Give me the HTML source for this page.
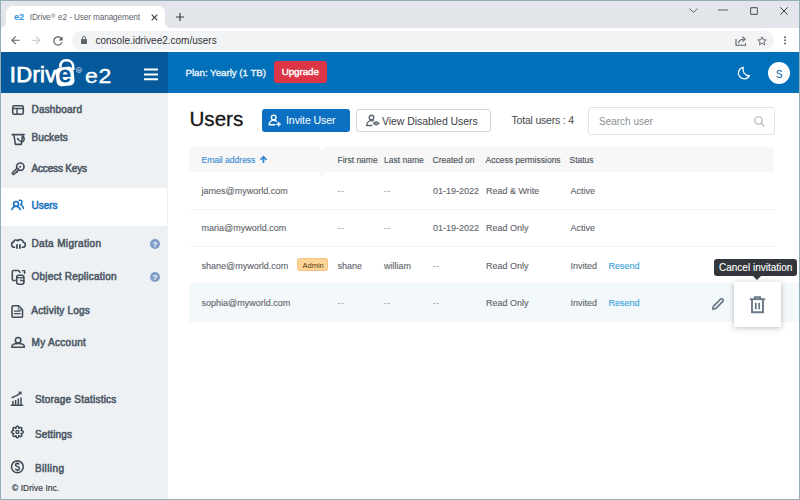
<!DOCTYPE html>
<html><head><meta charset="utf-8">
<style>
*{box-sizing:border-box;margin:0;padding:0}
html,body{width:800px;height:500px;overflow:hidden;background:#fff;font-family:"Liberation Sans",sans-serif;position:relative}
div,span,svg{position:absolute}
.t{white-space:nowrap;line-height:1}
svg{overflow:visible}
/* browser chrome */
#tabs{left:0;top:0;width:800px;height:28px;background:#e2e5e9}
#tab{left:6px;top:6px;width:159px;height:22px;background:#fff;border-radius:7px 7px 0 0}
#toolbar{left:0;top:28px;width:800px;height:24px;background:#fff}
#pill{left:72px;top:31px;width:702px;height:19px;border-radius:10px;background:#f1f3f4}
/* header */
#hdr{left:0;top:52px;width:800px;height:41px;background:#0070bb}
#hdrl{left:0;top:52px;width:168px;height:41px;background:#065a9b}
/* sidebar */
#side{left:0;top:93px;width:168px;height:407px;background:#eef1f4}
.mi{color:#4d5965;font-size:10px;-webkit-text-stroke:0.55px #4d5965}
#content{left:168px;top:93px;width:632px;height:407px;background:#fff}
.th{font-size:8.5px;color:#4f555b;-webkit-text-stroke:0.15px #4f555b}
.td{font-size:9px;color:#5f656b;-webkit-text-stroke:0.12px #5f656b}
.border{background:#93adb9}
</style></head><body>
<!-- tab strip -->
<div id="tabs"></div>
<div style="left:1px;top:22px;width:170px;height:6px;background:#fff"></div><div style="left:0;top:0;width:6px;height:28px;background:#e2e5e9;border-bottom-right-radius:6px"></div><div style="left:165px;top:0;width:635px;height:28px;background:#e2e5e9;border-bottom-left-radius:6px"></div><div id="tab"></div>
<span class="t" style="left:14px;top:12px;font-size:9.5px;font-weight:bold;color:#3596dc;letter-spacing:-0.3px">e2</span>
<span class="t" style="left:29.8px;top:13.8px;font-size:8.2px;letter-spacing:-0.1px;color:#5f6368">IDrive<span style="position:relative;font-size:6px;top:-1.5px;margin:0 0.5px">®</span> e2 - User management</span>
<svg style="left:151px;top:14px" width="7" height="7" viewBox="0 0 7 7"><path d="M0.7 0.7L6.3 6.3M6.3 0.7L0.7 6.3" stroke="#3c4043" stroke-width="1.2"/></svg>
<svg style="left:175.5px;top:13px" width="8" height="8" viewBox="0 0 8 8"><path d="M4 0V8M0 4H8" stroke="#3c4043" stroke-width="1.2"/></svg>
<!-- window controls -->
<svg style="left:689px;top:8px" width="9" height="5" viewBox="0 0 9 5"><path d="M0.5 0.5L4.5 4.5L8.5 0.5" fill="none" stroke="#5f6368" stroke-width="1"/></svg>
<svg style="left:718px;top:9px" width="10" height="2" viewBox="0 0 10 2"><path d="M0 1H10" stroke="#5f6368" stroke-width="1"/></svg>
<svg style="left:749.5px;top:6.5px" width="8" height="8" viewBox="0 0 8 8"><rect x="0.6" y="0.6" width="6.8" height="6.8" rx="1" fill="none" stroke="#5f6368" stroke-width="1.1"/></svg>
<svg style="left:780px;top:6.5px" width="8" height="8" viewBox="0 0 8 8"><path d="M0.3 0.3L7.7 7.7M7.7 0.3L0.3 7.7" stroke="#3c4043" stroke-width="1"/></svg>
<!-- toolbar -->
<div id="toolbar"></div>
<svg style="left:8.6px;top:34px" width="12.7" height="12.7" viewBox="0 0 24 24"><path d="M20 11H7.83l5.59-5.59L12 4l-8 8 8 8 1.41-1.41L7.83 13H20v-2z" fill="#5f6368"/></svg>
<svg style="left:30.1px;top:34px" width="12.7" height="12.7" viewBox="0 0 24 24"><path d="M12 4l-1.41 1.41L16.17 11H4v2h12.17l-5.58 5.59L12 20l8-8z" fill="#c4c7ca"/></svg>
<svg style="left:50.7px;top:33.7px" width="14" height="14" viewBox="0 0 24 24"><path d="M17.65 6.35C16.2 4.9 14.21 4 12 4c-4.42 0-7.99 3.58-7.99 8s3.57 8 7.99 8c3.730 0 6.84-2.55 7.73-6h-2.08c-.82 2.33-3.04 4-5.650 4-3.31 0-6-2.69-6-6s2.69-6 6-6c1.66 0 3.14.69 4.22 1.78L13 11h7V4l-2.35 2.35z" fill="#5f6368"/></svg>
<div id="pill"></div>
<svg style="left:81px;top:36px" width="6" height="8" viewBox="0 0 6 8"><path d="M1.3 3.3V2.3A1.7 1.7 0 0 1 4.7 2.3V3.3" fill="none" stroke="#5f6368" stroke-width="1"/><rect x="0" y="3" width="6" height="5" rx="0.6" fill="#5f6368"/></svg>
<span class="t" style="left:95.5px;top:36px;font-size:10px;color:#303236">console.idrivee2.com/users</span>
<svg style="left:734px;top:35px" width="14" height="12" viewBox="0 0 14 12"><path d="M2 4V10.3H11.5V8.3" fill="none" stroke="#5f6368" stroke-width="1.1"/><path d="M4.5 8.5C4.7 5.6 6.6 4.2 9.8 4.2" fill="none" stroke="#5f6368" stroke-width="1.1"/><path d="M8.3 1.8L11.3 4.2L8.3 6.6" fill="none" stroke="#5f6368" stroke-width="1.1"/></svg>
<svg style="left:757px;top:35.5px" width="10" height="10" viewBox="0 0 12 12"><path d="M6 1L7.4 4.4L11 4.7L8.3 7L9.1 10.6L6 8.7L2.9 10.6L3.7 7L1 4.7L4.6 4.4Z" fill="none" stroke="#5f6368" stroke-width="1.1" stroke-linejoin="round"/></svg>
<svg style="left:783px;top:35px" width="4" height="10" viewBox="0 0 4 10"><circle cx="2" cy="2.2" r="1" fill="#5f6368"/><circle cx="2" cy="5.3" r="1" fill="#5f6368"/><circle cx="2" cy="8.4" r="1" fill="#5f6368"/></svg>

<!-- app header -->
<div id="hdr"></div>
<div id="hdrl"></div>
<span class="t" style="left:9.8px;top:63.5px;font-size:22px;color:#fff;letter-spacing:0.3px;-webkit-text-stroke:0.75px #fff">IDriv</span>
<svg style="left:54px;top:58px" width="22" height="29" viewBox="0 0 22 29"><path d="M6.3 9.5C6 4.8 8.3 2.3 12.3 2.3C16.3 2.3 19.3 4.8 19.3 9.5V12" fill="none" stroke="#fff" stroke-width="2.6"/><g transform="rotate(-6 11 18)"><rect x="2" y="9" width="18" height="19" rx="5" fill="#fff"/></g><text x="11" y="24.3" font-size="21.5" font-weight="normal" fill="#065a9b" stroke="#065a9b" stroke-width="1" text-anchor="middle" font-family="Liberation Sans">e</text></svg>
<svg style="left:76px;top:67px" width="6" height="6" viewBox="0 0 6 6"><circle cx="3" cy="3" r="2.5" fill="none" stroke="#c8d8e8" stroke-width="0.8"/><text x="3" y="4.6" font-size="4.2" fill="#c8d8e8" text-anchor="middle" font-family="Liberation Sans">R</text></svg>
<span class="t" style="left:85px;top:64.5px;font-size:21px;color:#fff;letter-spacing:0.6px;transform:scaleX(1.1);transform-origin:0 0;-webkit-text-stroke:0.35px #fff">e2</span>
<svg style="left:144px;top:68px" width="14" height="13" viewBox="0 0 14 13"><path d="M0 1.6H14M0 6.4H14M0 11.2H14" stroke="#fff" stroke-width="2"/></svg>
<span class="t" style="left:185.5px;top:67.7px;font-size:9.8px;color:#eaf2fa;letter-spacing:-0.05px;-webkit-text-stroke:0.35px #eaf2fa">Plan: Yearly (1 TB)</span>
<div style="left:274px;top:61px;width:53px;height:22px;background:#dc3545;border-radius:3px"></div>
<span class="t" style="left:281.7px;top:67.4px;font-size:9.8px;color:#fff;letter-spacing:-0.05px;-webkit-text-stroke:0.4px #fff">Upgrade</span>
<svg style="left:738.4px;top:66px" width="13" height="14" viewBox="0 0 13 14"><path d="M5.3 1.3A5.8 5.8 0 1 0 11.4 9.6A6.2 6.2 0 0 1 5.3 1.3Z" fill="none" stroke="#fff" stroke-width="1.25" stroke-linejoin="round"/></svg>
<div style="left:768px;top:62px;width:22px;height:22px;border-radius:50%;background:#fff"></div>
<span class="t" style="left:775.5px;top:66px;font-size:14.5px;color:#1e6fb8;transform:scaleX(0.9);transform-origin:0 0">s</span>

<!-- sidebar -->
<div id="side"></div>
<div style="left:0;top:188px;width:167px;height:38px;background:#fff"></div>
<!-- dashboard icon -->
<svg style="left:12px;top:105px" width="12" height="10" viewBox="0 0 12 10"><rect x="0.7" y="0.7" width="10.6" height="8.6" rx="1.5" fill="none" stroke="#414c57" stroke-width="1.57"/><path d="M0.7 3.6H11.3M5 3.6V9.3" stroke="#414c57" stroke-width="1.46"/></svg>
<span class="t mi" style="left:31.5px;top:104.6px;letter-spacing:0.19px">Dashboard</span>
<svg style="left:8px;top:128px" width="22" height="22" viewBox="0 0 22 22"><path d="M4.2 6.6H16.1" stroke="#414c57" stroke-width="1.68" stroke-linecap="round"/><path d="M5.9 6.8L7.4 16.4H13.3L14.6 6.8" fill="none" stroke="#414c57" stroke-width="1.57" stroke-linejoin="round"/><path d="M14.4 8.2A2.2 2.8 0 0 1 13.4 13.8" fill="none" stroke="#414c57" stroke-width="1.46"/><path d="M9.6 10.5Q10.8 13.2 13.4 13.6" fill="none" stroke="#414c57" stroke-width="1.34"/><circle cx="9.7" cy="10.6" r="0.9" fill="#414c57"/></svg>
<span class="t mi" style="left:31.5px;top:133.2px;letter-spacing:0.13px">Buckets</span>
<svg style="left:8px;top:158px" width="22" height="22" viewBox="0 0 22 22"><circle cx="12.3" cy="8.7" r="3.7" fill="none" stroke="#414c57" stroke-width="1.68"/><circle cx="12.2" cy="8.8" r="1.05" fill="#414c57"/><path d="M5.3 15.3L9.5 11.4" stroke="#414c57" stroke-width="3.70" stroke-linecap="round"/><path d="M5.4 15.2L9.4 11.5" stroke="#eef1f4" stroke-width="0.9" stroke-linecap="round"/><path d="M7.6 14.6L9.8 12.6L9.9 15Z" fill="#414c57"/></svg>
<span class="t mi" style="left:31.5px;top:163.6px;letter-spacing:-0.17px">Access Keys</span>
<svg style="left:8px;top:194px" width="22" height="22" viewBox="0 0 22 22"><circle cx="8" cy="9.9" r="2.45" fill="none" stroke="#1b73c1" stroke-width="1.62"/><path d="M3.9 15.4Q5 12.3 8 12.3Q11 12.3 12.2 15.4" fill="none" stroke="#1b73c1" stroke-width="1.62" stroke-linecap="round"/><path d="M11.3 6.4Q13.8 6 14 8.3Q14 10 12.5 10.4Q14.9 11.3 15.5 14.4" fill="none" stroke="#1b73c1" stroke-width="1.57" stroke-linecap="round" stroke-linejoin="round"/></svg>
<span class="t mi" style="left:31.5px;top:200.8px;letter-spacing:-0.02px;color:#1b73c1;-webkit-text-stroke-color:#1b73c1">Users</span>
<svg style="left:8px;top:232px" width="22" height="22" viewBox="0 0 22 22"><path d="M7.2 15.3H6.2A2.75 2.75 0 0 1 5.7 9.9A2.3 2.3 0 0 1 9.7 8.8A3.3 3.3 0 0 1 15.4 10.2A2.6 2.6 0 0 1 14.6 15.3H13.6" fill="none" stroke="#414c57" stroke-width="1.62" stroke-linejoin="round"/><path d="M9 12.3V16.7M11.9 12.3V16.7" stroke="#414c57" stroke-width="1.79"/></svg>
<span class="t mi" style="left:31.5px;top:239.2px;letter-spacing:0.35px">Data Migration</span>
<div style="left:150px;top:239px;width:10px;height:10px;border-radius:50%;background:#7f9fc9"></div>
<span class="t" style="left:152.5px;top:240.5px;font-size:8px;font-weight:bold;color:#fff">?</span>
<svg style="left:6px;top:264px" width="26" height="26" viewBox="0 0 26 26"><path d="M9.7 16.5H7.6A1.3 1.3 0 0 1 6.3 15.2V7.8A1.3 1.3 0 0 1 7.6 6.5H12.5L14.6 8.7" fill="none" stroke="#414c57" stroke-width="1.57" stroke-linejoin="round"/><path d="M16 6.6H18.6V9.3" fill="none" stroke="#414c57" stroke-width="1.34"/><path d="M17.2 8.4L18.6 9.9L20 8.4Z" fill="#414c57"/><path d="M10.7 13.2V18.3A2 2 0 0 0 12.7 20.3H15.9A2 2 0 0 0 17.9 18.3V13.2A1.9 1.9 0 0 0 16 11.3H12.6A1.9 1.9 0 0 0 10.7 13.2Z" fill="none" stroke="#414c57" stroke-width="1.57"/><path d="M10.7 13.7H17.9" stroke="#414c57" stroke-width="1.34"/><path d="M14 16L18.6 17.4" stroke="#414c57" stroke-width="1.46"/></svg>
<span class="t mi" style="left:31.5px;top:272.3px;letter-spacing:0.23px">Object Replication</span>
<div style="left:150px;top:272px;width:10px;height:10px;border-radius:50%;background:#7f9fc9"></div>
<span class="t" style="left:152.5px;top:273.5px;font-size:8px;font-weight:bold;color:#fff">?</span>
<svg style="left:6px;top:298px" width="26" height="52" viewBox="0 0 26 52"><path d="M6 8.9A1.1 1.1 0 0 1 7.1 7.8H12.6L16.5 11.7V18.2A1.1 1.1 0 0 1 15.4 19.3H7.1A1.1 1.1 0 0 1 6 18.2Z" fill="none" stroke="#414c57" stroke-width="1.57" stroke-linejoin="round"/><path d="M12.3 8V11.9H16.3" fill="none" stroke="#414c57" stroke-width="0.8"/><path d="M7.9 13.1H14.6M7.9 15.7H14.6" stroke="#414c57" stroke-width="1.34"/></svg>
<span class="t mi" style="left:31.3px;top:306.3px;letter-spacing:0.20px">Activity Logs</span>
<svg style="left:6px;top:330px" width="26" height="22" viewBox="0 0 26 22"><circle cx="12.1" cy="10.2" r="2.75" fill="none" stroke="#414c57" stroke-width="1.62"/><path d="M5.9 17.3V16.6C5.9 14.6 8.6 13.5 12.1 13.5S18.3 14.6 18.3 16.6V17.3Z" fill="none" stroke="#414c57" stroke-width="1.62" stroke-linejoin="round"/></svg>
<span class="t mi" style="left:31.5px;top:338.2px;letter-spacing:0.30px">My Account</span>
<svg style="left:6px;top:386px" width="26" height="26" viewBox="0 0 26 26"><path d="M6.2 11.4Q11 10.2 14.5 7" fill="none" stroke="#414c57" stroke-width="1.57" stroke-linecap="round"/><path d="M12 5.8L15.6 5.6L15.3 9.3Z" fill="#414c57"/><path d="M6.9 19.2V14.9M9.6 19.2V13.9M12.3 19.2V12.5M15 19.2V11.4" stroke="#414c57" stroke-width="1.51"/><path d="M5.3 19.3H16.7" stroke="#414c57" stroke-width="1.46" stroke-linecap="round"/></svg>
<span class="t mi" style="left:34.9px;top:395.0px;letter-spacing:0.21px">Storage Statistics</span>
<svg style="left:6px;top:420px" width="26" height="26" viewBox="0 0 26 26"><path d="M17.25 12.00L17.22 12.23L17.14 12.45L17.00 12.66L16.82 12.86L16.59 13.03L16.33 13.18L16.03 13.31L15.72 13.40L15.38 13.47L15.05 13.51L15.26 13.78L15.44 14.06L15.60 14.35L15.72 14.65L15.80 14.94L15.84 15.23L15.83 15.49L15.78 15.74L15.68 15.96L15.54 16.14L15.36 16.28L15.14 16.38L14.89 16.43L14.63 16.44L14.34 16.40L14.05 16.32L13.75 16.20L13.46 16.04L13.18 15.86L12.91 15.65L12.87 15.98L12.80 16.32L12.71 16.63L12.58 16.93L12.43 17.19L12.26 17.42L12.06 17.60L11.85 17.74L11.63 17.82L11.40 17.85L11.17 17.82L10.95 17.74L10.74 17.60L10.54 17.42L10.37 17.19L10.22 16.93L10.09 16.63L10.00 16.32L9.93 15.98L9.89 15.65L9.62 15.86L9.34 16.04L9.05 16.20L8.75 16.32L8.46 16.40L8.17 16.44L7.91 16.43L7.66 16.38L7.44 16.28L7.26 16.14L7.12 15.96L7.02 15.74L6.97 15.49L6.96 15.23L7.00 14.94L7.08 14.65L7.20 14.35L7.36 14.06L7.54 13.78L7.75 13.51L7.42 13.47L7.08 13.40L6.77 13.31L6.47 13.18L6.21 13.03L5.98 12.86L5.80 12.66L5.66 12.45L5.58 12.23L5.55 12.00L5.58 11.77L5.66 11.55L5.80 11.34L5.98 11.14L6.21 10.97L6.47 10.82L6.77 10.69L7.08 10.60L7.42 10.53L7.75 10.49L7.54 10.22L7.36 9.94L7.20 9.65L7.08 9.35L7.00 9.06L6.96 8.77L6.97 8.51L7.02 8.26L7.12 8.04L7.26 7.86L7.44 7.72L7.66 7.62L7.91 7.57L8.17 7.56L8.46 7.60L8.75 7.68L9.05 7.80L9.34 7.96L9.62 8.14L9.89 8.35L9.93 8.02L10.00 7.68L10.09 7.37L10.22 7.07L10.37 6.81L10.54 6.58L10.74 6.40L10.95 6.26L11.17 6.18L11.40 6.15L11.63 6.18L11.85 6.26L12.06 6.40L12.26 6.58L12.43 6.81L12.58 7.07L12.71 7.37L12.80 7.68L12.87 8.02L12.91 8.35L13.18 8.14L13.46 7.96L13.75 7.80L14.05 7.68L14.34 7.60L14.63 7.56L14.89 7.57L15.14 7.62L15.36 7.72L15.54 7.86L15.68 8.04L15.78 8.26L15.83 8.51L15.84 8.77L15.80 9.06L15.72 9.35L15.60 9.65L15.44 9.94L15.26 10.22L15.05 10.49L15.38 10.53L15.72 10.60L16.03 10.69L16.33 10.82L16.59 10.97L16.82 11.14L17.00 11.34L17.14 11.55L17.22 11.77Z" fill="none" stroke="#414c57" stroke-width="1.51" stroke-linejoin="round"/><circle cx="11.4" cy="12" r="1.5" fill="none" stroke="#414c57" stroke-width="1.34"/></svg>
<span class="t mi" style="left:34.9px;top:429.6px;letter-spacing:0.13px">Settings</span>
<svg style="left:6px;top:455px" width="26" height="26" viewBox="0 0 26 26"><circle cx="11.4" cy="11.8" r="5.9" fill="none" stroke="#414c57" stroke-width="1.57"/><path d="M13.3 9.4C13 8.7 12.3 8.4 11.4 8.4C10.3 8.4 9.5 9 9.5 9.9C9.5 11.9 13.4 11.1 13.4 13.4C13.4 14.4 12.5 15 11.4 15C10.4 15 9.7 14.6 9.4 13.8M11.4 7.3V8.4M11.4 15V16.2" fill="none" stroke="#414c57" stroke-width="1.51"/></svg>
<span class="t mi" style="left:34.9px;top:464.0px;letter-spacing:0.40px">Billing</span>
<span class="t" style="left:12px;top:484px;font-size:8.4px;letter-spacing:0.08px;color:#3a3f44;-webkit-text-stroke:0.2px #3a3f44">© IDrive Inc.</span>

<!-- content -->
<span class="t" style="left:189.5px;top:108.5px;font-size:20.6px;color:#151515;-webkit-text-stroke:0.3px #151515">Users</span>
<div style="left:262px;top:109px;width:88px;height:22.5px;background:#0b70c2;border-radius:3px"></div>
<svg style="left:264px;top:110px" width="22" height="22" viewBox="0 0 22 22"><circle cx="9.7" cy="7.5" r="2.35" fill="none" stroke="#fff" stroke-width="1.4"/><path d="M10.8 14.8H5.6Q5 14.8 5.2 14.1C5.8 11.8 7.5 10.4 9.7 10.4C10.8 10.4 11.8 10.7 12.5 11.3" fill="none" stroke="#fff" stroke-width="1.4" stroke-linecap="round"/><path d="M14.6 12.1V16.5M12.4 14.3H16.8" stroke="#fff" stroke-width="1.4"/></svg>
<span class="t" style="left:286px;top:114.5px;font-size:10.6px;letter-spacing:-0.1px;color:#fff">Invite User</span>
<div style="left:356px;top:109px;width:135px;height:23px;background:#fff;border:1px solid #d3d7db;border-radius:3px"></div>
<svg style="left:360px;top:110px" width="22" height="22" viewBox="0 0 22 22"><circle cx="11.5" cy="7.5" r="2.25" fill="none" stroke="#5b6570" stroke-width="1.35"/><path d="M11.8 15.5H7Q6.4 15.5 6.6 14.8C7.2 12.3 9 10.6 11.5 10.4C12.3 10.4 12.9 10.5 13.4 10.8" fill="none" stroke="#5b6570" stroke-width="1.35" stroke-linecap="round"/><path d="M13.4 13.4Q16.2 10.6 19 13.4Q16.2 16.2 13.4 13.4Z" fill="none" stroke="#5b6570" stroke-width="1.25" stroke-linejoin="round"/><ellipse cx="16.1" cy="13.4" rx="1.1" ry="0.6" fill="none" stroke="#5b6570" stroke-width="0.8"/></svg>
<span class="t" style="left:382px;top:116px;font-size:10.5px;letter-spacing:-0.05px;color:#3a4047">View Disabled Users</span>
<span class="t" style="left:511.5px;top:115px;font-size:10.5px;letter-spacing:-0.2px;color:#43484e">Total users : 4</span>
<div style="left:588px;top:107px;width:187px;height:28px;background:#fff;border:1px solid #dfe3e7;border-radius:3px"></div>
<span class="t" style="left:599px;top:116.5px;font-size:10px;color:#8a8f95">Search user</span>
<svg style="left:753.5px;top:115.8px" width="11" height="11" viewBox="0 0 11 11"><circle cx="4.5" cy="4.5" r="3.7" fill="none" stroke="#a7adb3" stroke-width="1.1"/><path d="M7.2 7.2L10.3 10.3" stroke="#a7adb3" stroke-width="1.2"/></svg>

<!-- table header -->
<div style="left:189px;top:147px;width:585px;height:25px;background:#f7f7f7"></div>
<div style="left:320px;top:147px;width:4px;height:2px;background:#fff"></div><div style="left:320px;top:172px;width:4px;height:4px;background:#f9f9f9"></div>
<span class="t th" style="left:201.5px;top:155.5px;color:#3a8dd0;-webkit-text-stroke-color:#3a8dd0">Email address</span>
<svg style="left:260px;top:156px" width="7" height="7" viewBox="0 0 7 7"><path d="M3.5 7V1.5" fill="none" stroke="#2f86cf" stroke-width="1.7"/><path d="M0.5 3.9L3.5 0.6L6.5 3.9" fill="none" stroke="#2f86cf" stroke-width="1.6"/></svg>
<span class="t th" style="left:337.5px;top:155.5px">First name</span>
<span class="t th" style="left:384px;top:155.5px">Last name</span>
<span class="t th" style="left:432.5px;top:155.5px">Created on</span>
<span class="t th" style="left:485.5px;top:155.5px">Access permissions</span>
<span class="t th" style="left:569.5px;top:155.5px">Status</span>

<!-- rows -->
<div style="left:189px;top:209px;width:586px;height:1px;background:#f1f2f3"></div>
<div style="left:189px;top:246px;width:586px;height:1px;background:#f1f2f3"></div>
<div style="left:189px;top:283.3px;width:610px;height:38.5px;background:#f3f8fb"></div>

<span class="t td" style="left:201.5px;top:187px">james@myworld.com</span>
<span class="t td" style="left:337.5px;top:187px;color:#8f9499;-webkit-text-stroke:0;letter-spacing:0.6px;font-size:8.5px">--</span>
<span class="t td" style="left:384px;top:187px;color:#8f9499;-webkit-text-stroke:0;letter-spacing:0.6px;font-size:8.5px">--</span>
<span class="t td" style="left:433px;top:187px">01-19-2022</span>
<span class="t td" style="left:486px;top:187px">Read &amp; Write</span>
<span class="t td" style="left:570.5px;top:187px">Active</span>

<span class="t td" style="left:201.5px;top:224px">maria@myworld.com</span>
<span class="t td" style="left:337.5px;top:224px;color:#8f9499;-webkit-text-stroke:0;letter-spacing:0.6px;font-size:8.5px">--</span>
<span class="t td" style="left:384px;top:224px;color:#8f9499;-webkit-text-stroke:0;letter-spacing:0.6px;font-size:8.5px">--</span>
<span class="t td" style="left:433px;top:224px">01-19-2022</span>
<span class="t td" style="left:486px;top:224px">Read Only</span>
<span class="t td" style="left:570.5px;top:224px">Active</span>

<span class="t td" style="left:201.5px;top:261.8px">shane@myworld.com</span>
<div style="left:297px;top:258px;width:31px;height:13px;background:#fdd596;border:1px solid #f4c27c;border-radius:2.5px"></div>
<span class="t" style="left:302.5px;top:261.5px;font-size:7.5px;color:#5a3a10">Admin</span>
<span class="t td" style="left:337.5px;top:261.8px">shane</span>
<span class="t td" style="left:384px;top:261.8px">william</span>
<span class="t td" style="left:433px;top:261.8px;color:#8f9499;-webkit-text-stroke:0;letter-spacing:0.6px;font-size:8.5px">--</span>
<span class="t td" style="left:486px;top:261.8px">Read Only</span>
<span class="t td" style="left:570.5px;top:261.8px">Invited</span>
<span class="t td" style="left:608.5px;top:261.8px;color:#3aa2dc;-webkit-text-stroke-color:#3aa2dc">Resend</span>

<span class="t td" style="left:201.5px;top:299px">sophia@myworld.com</span>
<span class="t td" style="left:337.5px;top:299px;color:#8f9499;-webkit-text-stroke:0;letter-spacing:0.6px;font-size:8.5px">--</span>
<span class="t td" style="left:384px;top:299px;color:#8f9499;-webkit-text-stroke:0;letter-spacing:0.6px;font-size:8.5px">--</span>
<span class="t td" style="left:433px;top:299px;color:#8f9499;-webkit-text-stroke:0;letter-spacing:0.6px;font-size:8.5px">--</span>
<span class="t td" style="left:486px;top:299px">Read Only</span>
<span class="t td" style="left:570.5px;top:299px">Invited</span>
<span class="t td" style="left:608.5px;top:299px;color:#3aa2dc;-webkit-text-stroke-color:#3aa2dc">Resend</span>

<!-- pencil -->
<svg style="left:710px;top:296px" width="16" height="16" viewBox="0 0 16 16"><path d="M2.8 13.2L3.3 10.4L10.6 3.1A1.3 1.3 0 0 1 12.4 3.1L12.9 3.6A1.3 1.3 0 0 1 12.9 5.4L5.6 12.7Z" fill="none" stroke="#6b7888" stroke-width="1.7" stroke-linejoin="round"/></svg>
<!-- tooltip -->
<div style="left:714px;top:259px;width:83px;height:17px;background:#33373b;border-radius:3px"></div>
<svg style="left:752px;top:275px" width="10" height="6" viewBox="0 0 10 6"><path d="M0 0H10L5 5Z" fill="#33373b"/></svg>
<span class="t" style="left:719px;top:263px;font-size:10px;color:#fff;-webkit-text-stroke:0.1px #fff">Cancel invitation</span>
<div style="left:734px;top:281.5px;width:47px;height:45px;background:#fff;box-shadow:0 1px 6px rgba(0,0,0,0.25)"></div>
<svg style="left:749px;top:296px" width="17" height="18" viewBox="0 0 17 18"><path d="M0.8 3.2H16.2" stroke="#6b7888" stroke-width="1.9"/><path d="M5.8 3V1.2H11.2V3" fill="none" stroke="#6b7888" stroke-width="1.7"/><path d="M3 3.8V16.2H14V3.8" fill="none" stroke="#6b7888" stroke-width="1.9"/><path d="M6.8 6.8V13.2M10.2 6.8V13.2" stroke="#6b7888" stroke-width="1.8"/></svg>

<!-- window border -->
<div class="border" style="left:0;top:0;width:800px;height:1px"></div>
<div class="border" style="left:0;top:499px;width:800px;height:1px"></div>
<div class="border" style="left:0;top:0;width:1px;height:500px"></div>
<div class="border" style="left:799px;top:0;width:1px;height:500px"></div>
</body></html>
